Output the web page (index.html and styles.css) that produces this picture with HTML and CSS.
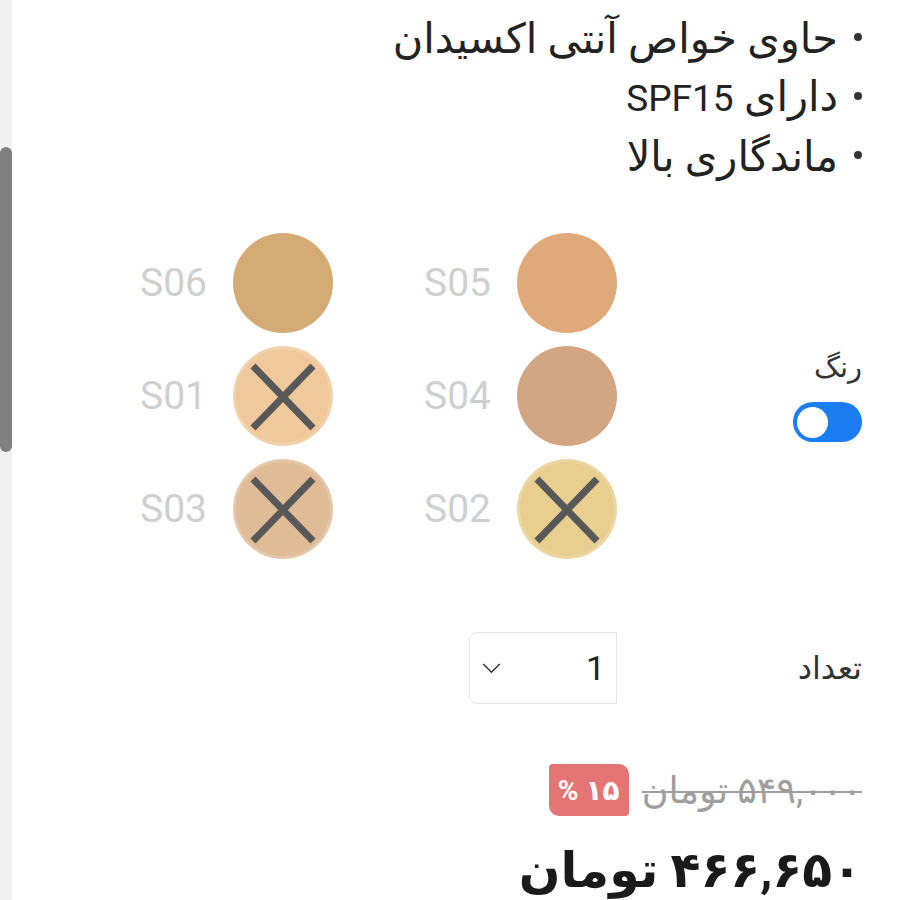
FILE: index.html
```html
<!DOCTYPE html>
<html lang="fa">
<head>
<meta charset="utf-8">
<link rel="stylesheet" href="styles.css">
</head>
<body>
<div class="page">
  <aside class="scrollbar"><div class="thumb"></div></aside>
  <main class="content" dir="rtl">
    <ul class="features">
      <li><span class="dot"></span><span>حاوی خواص آنتی اکسیدان</span></li>
      <li><span class="dot"></span><span>دارای <span class="latin">SPF15</span></span></li>
      <li><span class="dot"></span><span>ماندگاری بالا</span></li>
    </ul>

    <section class="row color-row">
      <div class="label-col">
        <div class="label small">رنگ</div>
        <div class="toggle"><div class="knob"></div></div>
      </div>
      <div class="swatches">
        <div class="swatch"><div class="circle c05"></div><span class="code">S05</span></div>
        <div class="swatch"><div class="circle c06"></div><span class="code">S06</span></div>
        <div class="swatch"><div class="circle c04"></div><span class="code">S04</span></div>
        <div class="swatch"><div class="circle c01 out"><svg viewBox="0 0 100 100"><path d="M20 20 L80 82 M80 20 L20 82"/></svg></div><span class="code">S01</span></div>
        <div class="swatch"><div class="circle c02 out"><svg viewBox="0 0 100 100"><path d="M20 20 L80 82 M80 20 L20 82"/></svg></div><span class="code">S02</span></div>
        <div class="swatch"><div class="circle c03 out"><svg viewBox="0 0 100 100"><path d="M20 20 L80 82 M80 20 L20 82"/></svg></div><span class="code">S03</span></div>
      </div>
    </section>

    <section class="row qty-row">
      <div class="label-col"><div class="label">تعداد</div></div>
      <div class="select">
        <span class="qty">1</span>
        <svg class="chev" viewBox="0 0 20 12"><path d="M1 1 L10 10 L19 1"/></svg>
      </div>
    </section>

    <div class="price-row">
      <span class="old">۵۴۹,۰۰۰ تومان</span>
      <span class="badge">۱۵ %</span>
    </div>

    <div class="final">۴۶۶,۶۵۰ تومان</div>
  </main>
</div>
</body>
</html>
```
FILE: styles.css
```css
html, body {
  margin: 0;
  padding: 0;
  background: #fff;
}
body {
  font-family: Roboto, "Noto Sans", "DejaVu Sans", sans-serif;
  color: #222;
  overflow: hidden;
  height: 900px;
}
.page {
  display: flex;
  height: 900px;
  overflow: hidden;
}
.scrollbar {
  width: 12px;
  flex: 0 0 12px;
  background: #f1f1f1;
  height: 900px;
}
.thumb {
  margin-top: 147px;
  height: 305px;
  width: 12px;
  border-radius: 6px;
  background: #808080;
}
.content {
  flex: 1;
  padding-right: 38px;
  display: flex;
  flex-direction: column;
}
.features {
  list-style: none;
  margin: 10px 0 0 0;
  padding: 0;
  font-size: 41.5px;
  line-height: 58px;
  color: #222;
}
.features li {
  display: flex;
  gap: 16px;
  align-items: center;
}
.latin {
  font-size: 37px;
}
.dot {
  width: 8px;
  height: 8px;
  border-radius: 50%;
  background: #333;
  flex: 0 0 8px;
  margin-bottom: 4px;
}
.row {
  display: flex;
  align-items: center;
}
.label-col {
  width: 245px;
  flex: 0 0 245px;
  display: flex;
  flex-direction: column;
  align-items: flex-start;
}
.label {
  font-size: 32px;
  color: #333;
}
.label.small {
  font-size: 29px;
  line-height: 34px;
  margin-bottom: 18px;
}
.color-row {
  margin-top: 47px;
}
.toggle {
  width: 69px;
  height: 40px;
  border-radius: 20px;
  background: #1a7ef2;
  display: flex;
  align-items: center;
  justify-content: flex-end;
  padding: 0 4px;
  box-sizing: border-box;
}
.knob {
  width: 31px;
  height: 31px;
  border-radius: 50%;
  background: #fff;
}
.swatches {
  display: grid;
  grid-template-columns: 284px 284px;
  row-gap: 13px;
}
.swatch {
  display: flex;
  align-items: center;
  gap: 26px;
}
.circle {
  width: 100px;
  height: 100px;
  border-radius: 50%;
  box-sizing: border-box;
}
.circle svg {
  width: 100px;
  height: 100px;
  display: block;
}
.circle path {
  stroke: #585858;
  stroke-width: 7;
  fill: none;
}
.circle.out {
  border: 3px solid rgba(255, 255, 255, 0.18);
}
.circle.out svg {
  margin: -3px;
}
.c05 { background: #dfa97a; }
.c06 { background: #d4aa75; }
.c04 { background: #d3a683; }
.c01 { background: #efc89b; }
.c02 { background: #e8cf8f; }
.c03 { background: #dfbb96; }
.code {
  font-size: 39px;
  color: #cfcfcf;
}
.qty-row {
  margin-top: 73px;
}
.select {
  width: 148px;
  height: 72px;
  box-sizing: border-box;
  border: 1.5px solid #e6e6e6;
  border-top-left-radius: 8px;
  border-bottom-left-radius: 8px;
  display: flex;
  align-items: center;
  justify-content: space-between;
  padding: 0 11px 0 12px;
}
.qty {
  font-size: 34px;
  color: #222;
}
.chev {
  width: 19px;
  height: 11px;
}
.chev path {
  stroke: #333;
  stroke-width: 1.6;
  fill: none;
}
.price-row {
  margin-top: 60px;
  display: flex;
  align-items: center;
  gap: 13px;
}
.old {
  font-size: 36.5px;
  color: #9e9e9e;
  text-decoration: line-through;
  text-decoration-thickness: 2px;
}
.badge {
  width: 80px;
  height: 52px;
  box-sizing: border-box;
  background: #e57575;
  color: #fff;
  font-weight: bold;
  font-size: 28px;
  display: flex;
  align-items: center;
  justify-content: center;
  border-radius: 4px 10px 4px 10px;
}
.final {
  margin-top: 26px;
  font-size: 49px;
  font-weight: bold;
  color: #1a1a1a;
}
```
